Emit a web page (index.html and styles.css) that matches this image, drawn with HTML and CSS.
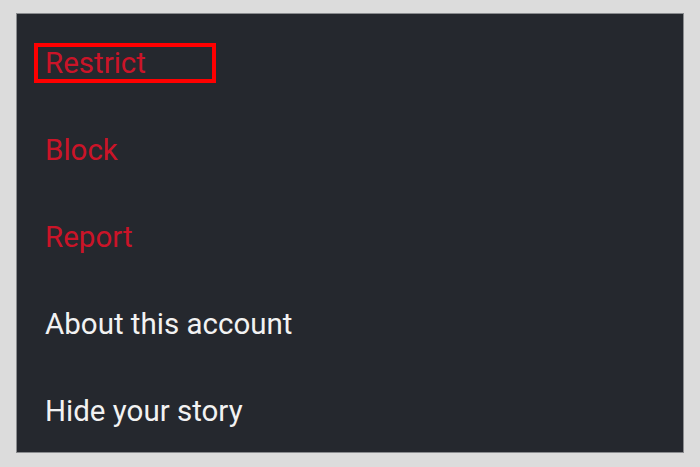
FILE: index.html
```html
<!DOCTYPE html>
<html>
<head>
<meta charset="utf-8">
<link rel="stylesheet" href="styles.css">
</head>
<body>
<div class="panel">
  <div class="item danger"><span class="highlight">Restrict</span></div>
  <div class="item danger">Block</div>
  <div class="item danger">Report</div>
  <div class="item">About this account</div>
  <div class="item">Hide your story</div>
</div>
</body>
</html>
```
FILE: styles.css
```css
html, body {
  margin: 0;
  padding: 0;
}
body {
  width: 700px;
  height: 467px;
  background: #dcdcdc;
  padding: 13px 0 0 16px;
  box-sizing: border-box;
  overflow: hidden;
  font-family: Roboto, "Liberation Sans", sans-serif;
}
.panel {
  width: 668px;
  height: 440px;
  box-sizing: border-box;
  background: #25282e;
  border: 1px solid #8a8c8f;
  padding-top: 5px;
  overflow: hidden;
}
.item {
  height: 87px;
  display: flex;
  align-items: center;
  padding-left: 28px;
  font-size: 29.5px;
  color: #f2f2f2;
}
.item.danger {
  color: #cb1428;
}
.highlight {
  display: inline-block;
  width: 182px;
  height: 40px;
  box-sizing: border-box;
  border: 4px solid #ff0000;
  padding-left: 7px;
  margin-left: -11px;
  line-height: 32px;
}
```
